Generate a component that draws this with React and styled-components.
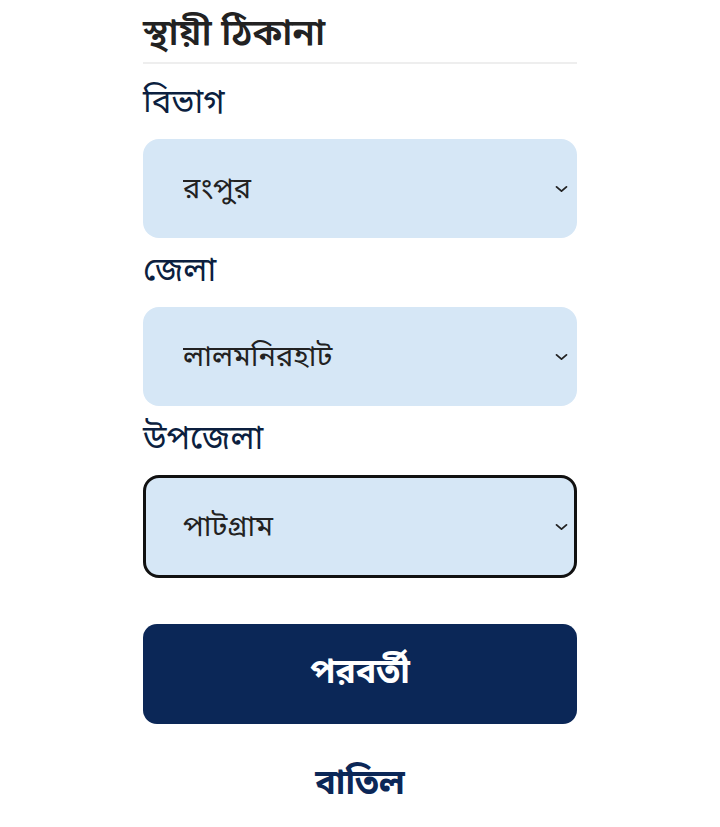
import React from "react";
import styled, { createGlobalStyle } from "styled-components";

const Global = createGlobalStyle`
  body {
    margin: 0;
    background: #ffffff;
    font-family: "Noto Sans Bengali", "Noto Sans", "Lohit Bengali", sans-serif;
  }
`;

const Page = styled.div`
  max-width: 434px;
  margin: 0 auto;
  padding-top: 12px;
  display: flex;
  flex-direction: column;
`;

const Title = styled.h2`
  margin: 0 0 6px;
  font-size: 37px;
  font-weight: 600;
  color: #222;
  line-height: 48px;
  padding-bottom: 2px;
  border-bottom: 2px solid #eeeeee;
`;

const Field = styled.div`
  display: flex;
  flex-direction: column;
  margin-top: 13px;
`;

const Label = styled.label`
  font-size: 33px;
  color: #0c1f3f;
  line-height: 44px;
  margin-bottom: 12px;
`;

const SelectWrap = styled.div`
  position: relative;
`;

const Select = styled.select`
  appearance: none;
  -webkit-appearance: none;
  width: 100%;
  height: ${(p) => (p.$focused ? "103px" : "99px")};
  box-sizing: border-box;
  background: #d6e7f6;
  border: ${(p) => (p.$focused ? "3px solid #111" : "none")};
  border-radius: 16px;
  padding: 4px 40px 0 ${(p) => (p.$focused ? "37px" : "40px")};
  font-family: inherit;
  font-size: 29px;
  color: #222;
  outline: none;
`;

const Chevron = styled.svg`
  position: absolute;
  right: 7px;
  top: 50%;
  transform: translateY(-50%);
  width: 17px;
  height: 17px;
  pointer-events: none;
`;

const Primary = styled.button`
  margin-top: 46px;
  height: 100px;
  border: none;
  border-radius: 14px;
  background: #0b2757;
  color: #fff;
  font-family: inherit;
  font-size: 34px;
  font-weight: 700;
`;

const Cancel = styled.button`
  margin: 38px auto 0;
  background: none;
  border: none;
  font-family: inherit;
  font-size: 34px;
  font-weight: 700;
  color: #0b2757;
`;

const fields = [
  { label: "বিভাগ", value: "রংপুর" },
  { label: "জেলা", value: "লালমনিরহাট" },
  { label: "উপজেলা", value: "পাটগ্রাম", focused: true },
];

const Dropdown = ({ value, focused }) => (
  <SelectWrap>
    <Select $focused={focused} defaultValue={value}>
      <option>{value}</option>
    </Select>
    <Chevron viewBox="0 0 24 24" fill="none" stroke="#222" strokeWidth="2.6" strokeLinecap="round" strokeLinejoin="round">
      <path d="M5 9l7 6 7-6" />
    </Chevron>
  </SelectWrap>
);

export default function App() {
  return (
    <>
      <Global />
      <Page>
        <Title>স্থায়ী ঠিকানা</Title>
        {fields.map((f) => (
          <Field key={f.label}>
            <Label>{f.label}</Label>
            <Dropdown value={f.value} focused={f.focused} />
          </Field>
        ))}
        <Primary>পরবর্তী</Primary>
        <Cancel>বাতিল</Cancel>
      </Page>
    </>
  );
}
